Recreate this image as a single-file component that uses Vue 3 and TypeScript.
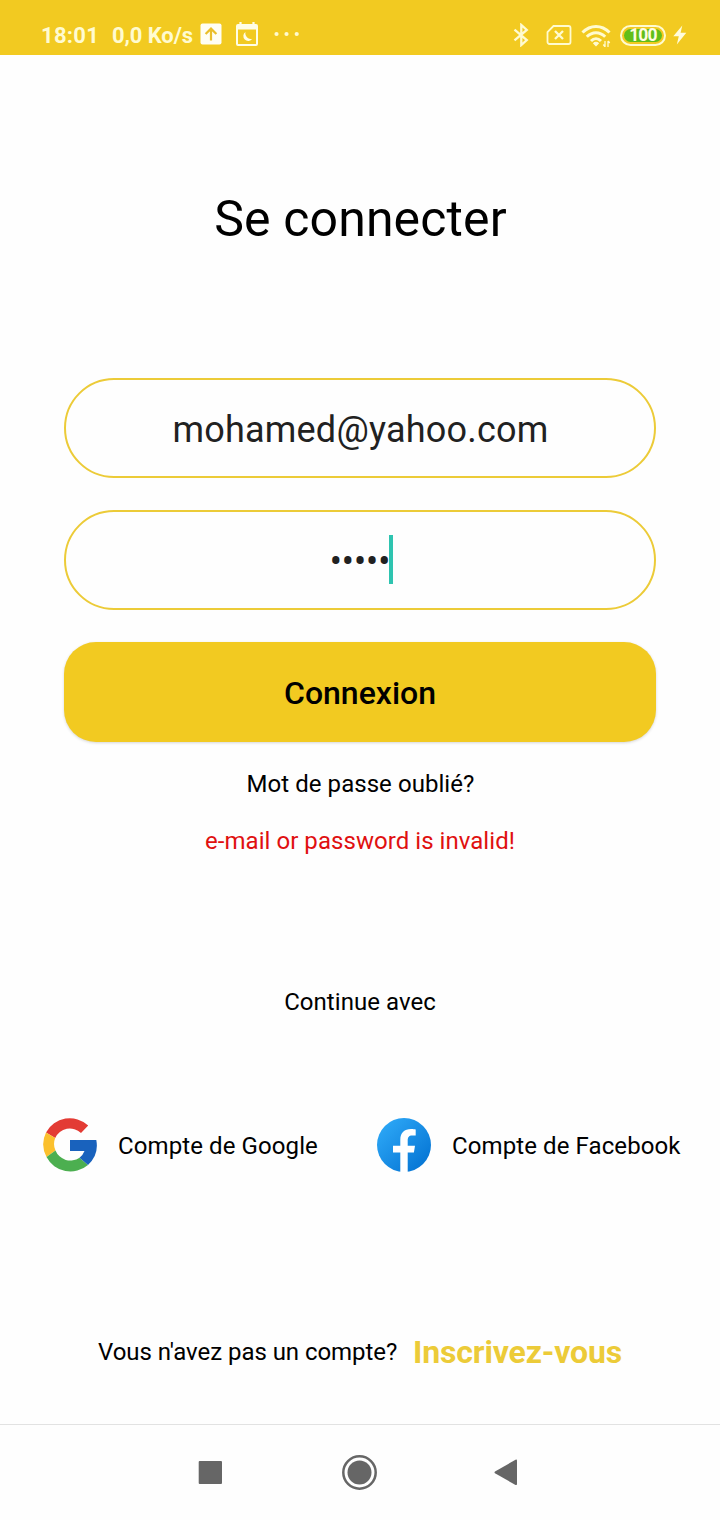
<script setup lang="ts">
import { ref } from 'vue'

const email = ref<string>('mohamed@yahoo.com')
const passwordLength = ref<number>(5)
</script>

<template>
  <div class="screen">
    <header class="status">
      <span class="clock">18:01</span>
      <span class="speed">0,0 Ko/s</span>
      <svg class="upload" width="22" height="22" viewBox="0 0 22 22">
        <rect x="0.5" y="0.5" width="21" height="21" rx="2" fill="#fffef4" />
        <path d="M11 17.500V6M5.600 11L11 5.600l5.400 5.400" fill="none" stroke="#eabf2b" stroke-width="2.200" />
      </svg>
      <svg class="calendar" width="24" height="24" viewBox="0 0 24 24">
        <path d="M5.500 0v4M18.500 0v4" stroke="#fffde6" stroke-width="2.200" />
        <path fill-rule="evenodd" fill="#fffde6" d="M3 2h18a2 2 0 0 1 2 2v18a2 2 0 0 1-2 2H3a2 2 0 0 1-2-2V4a2 2 0 0 1 2-2zM3 7.500V22h18V7.500z" />
        <path d="M10.500 10a4.900 4.900 0 1 0 6.800 6.800a5.600 5.600 0 0 1-6.800-6.800z" fill="#fffde6" />
      </svg>
      <svg class="more" width="26" height="6" viewBox="0 0 26 6">
        <circle cx="2.500" cy="3" r="2.100" /><circle cx="12.500" cy="3" r="2.100" /><circle cx="22.700" cy="3" r="2.100" />
      </svg>
      <svg class="bluetooth" width="16" height="24" viewBox="0 0 16 24">
        <path d="M1.500 6.700L13.800 17 8.300 22V2L13.800 7 1.500 17.300" fill="none" stroke="#fffbd0" stroke-width="2.300" />
      </svg>
      <svg class="sim" width="26" height="20" viewBox="0 0 26 20">
        <path d="M7.500 1H22.500a2 2 0 0 1 2 2v14a2 2 0 0 1-2 2h-19a2 2 0 0 1-2-2V7z" fill="none" stroke="#fffbd0" stroke-width="1.800" />
        <path d="M9 6l8 8M17 6l-8 8" stroke="#fffbd0" stroke-width="2.300" />
      </svg>
      <svg class="wifi" width="30" height="24" viewBox="0 0 30 24">
        <g fill="none" stroke="#fffbd0" stroke-width="3">
          <path d="M1.500 8.500C9.500 0.500 20.500 0.500 28.500 8.500" />
          <path d="M5.800 12.800C11.300 7.300 18.700 7.300 24.200 12.800" />
          <path d="M10 17C13 14 17 14 20 17" />
        </g>
        <path d="M15 22.500L11.800 19.200Q15 16.500 18.200 19.200z" fill="#fffbd0" />
        <path d="M24 17v6M27 17v6M22.300 20.500l1.500 2M28.700 19l-1.500-2" fill="none" stroke="#fffbd0" stroke-width="1.300" />
      </svg>
      <div class="battery"><span class="level">100</span></div>
      <svg class="bolt" width="14" height="20" viewBox="0 0 14 20">
        <path d="M9.300 0.500L0.300 11.300H5.800L3.800 19.500 13.300 7.800H7.600z" fill="#fffcdc" />
      </svg>
    </header>

    <main class="content">
      <h1 class="title">Se connecter</h1>
      <div class="field email">{{ email }}</div>
      <div class="field password">
        <span class="dots">{{ '•'.repeat(passwordLength) }}</span><i class="caret"></i>
      </div>
      <button class="submit" type="button">Connexion</button>
      <p class="forgot">Mot de passe oublié?</p>
      <p class="error">e-mail or password is invalid!</p>
      <p class="continue">Continue avec</p>

      <div class="accounts">
        <div class="account google">
          <svg width="54" height="54" viewBox="0 0 54 54">
            <path fill="#e33b34" d="M3 14.500A27 27 0 0 1 45.200 7.500L38 15A16 16 0 0 0 12.200 20z" />
            <path fill="#fbc02d" d="M3 14.500A27 27 0 0 0 3.500 39L12.500 32.500A16 16 0 0 1 12.200 20z" />
            <path fill="#4caf50" d="M3.500 39A27 27 0 0 0 45 47L36.500 39.700A16 16 0 0 1 12.500 32.500z" />
            <path fill="#1962bd" d="M27 22H53.300A27 27 0 0 1 45 47L36.500 39.700A15 15 0 0 0 41.500 33H27z" />
          </svg>
          <span>Compte de Google</span>
        </div>
        <div class="account facebook">
          <svg width="54" height="54" viewBox="0 0 54 54">
            <defs>
              <linearGradient id="fb" x1="0.150" y1="0.150" x2="0.850" y2="0.850">
                <stop offset="0" stop-color="#2aa4f4" />
                <stop offset="1" stop-color="#0878d6" />
              </linearGradient>
            </defs>
            <circle cx="27" cy="27" r="27" fill="url(#fb)" />
            <path fill="#fff" d="M30.700 34.500h6.200l1.100-6.800h-7.300V22.500c0-3 1-5 4.500-5H38.700V11.500c-1-.2-2.700-.4-4.700-.4-6.500 0-10.700 3.600-10.700 10.700v5.900H16v6.800h7.300V54h7.400z" />
          </svg>
          <span>Compte de Facebook</span>
        </div>
      </div>

      <div class="signup">
        <span class="question">Vous n'avez pas un compte?</span>
        <a class="join">Inscrivez-vous</a>
      </div>
    </main>

    <nav class="navbar">
      <svg class="recent" width="24" height="23" viewBox="0 0 24 23"><rect x="0.700" y="0" width="23.300" height="23" rx="1" /></svg>
      <svg class="home" width="37" height="35" viewBox="0 0 37 35">
        <circle cx="18.500" cy="17.500" r="16.200" fill="none" stroke="#666" stroke-width="2.500" />
        <circle cx="18.500" cy="17.500" r="12" />
      </svg>
      <svg class="back" width="24" height="27" viewBox="0 0 24 27">
        <path d="M1 12.600L21.500 0.800Q23 .2 23 1.600V25.100Q23 26.600 21.500 25.900L1 14.300Q0 13.500 1 12.600z" />
      </svg>
    </nav>
  </div>
</template>

<style>
body {
  margin: 0;
  background: #fefefe;
}
</style>

<style scoped>
.screen {
  width: 720px;
  height: 1520px;
  display: flex;
  flex-direction: column;
  overflow: hidden;
  background: #fefefe;
  color: #000;
  font-family: Roboto, "Liberation Sans", sans-serif;
}
.screen svg {
  display: block;
  flex: none;
}
.status {
  height: 55px;
  box-sizing: border-box;
  padding: 16px 0 0 41px;
  display: flex;
  align-items: center;
  background: #f2ca21;
  color: #fffbd0;
  font-size: 22px;
  line-height: 39px;
  font-weight: 700;
  white-space: nowrap;
}
.clock { width: 71px; letter-spacing: 0.3px; }
.speed { width: 88px; letter-spacing: -0.1px; }
.upload { margin-top: -3px; }
.calendar { margin: -3px 0 0 13px; }
.more { margin: -3px 0 0 15px; fill: #fffbd0; }
.bluetooth { margin: -1px 0 0 213px; }
.sim { margin: -1px 0 0 17px; }
.wifi { margin: 0 0 0 9px; }
.battery {
  width: 46px;
  height: 21px;
  box-sizing: border-box;
  margin: -1px 0 0 9px;
  padding: 2px;
  border: 2px solid #fffbd0;
  border-radius: 11px;
}
.level {
  display: block;
  height: 13px;
  border-radius: 7px;
  background: #62be18;
  color: #fffce0;
  font-size: 17.500px;
  line-height: 13px;
  letter-spacing: -0.8px;
  text-align: center;
}
.bolt { margin: -1px 0 0 7px; }
.content {
  flex: 1;
  padding: 0 64px;
  display: flex;
  flex-direction: column;
}
.title {
  margin: 134px 0 0;
  padding-left: 1px;
  font-size: 50px;
  line-height: 60px;
  font-weight: 400;
  letter-spacing: 0.12px;
  text-align: center;
}
.field {
  height: 100px;
  box-sizing: border-box;
  border: 2px solid #eccb38;
  border-radius: 50px;
  display: flex;
  align-items: center;
  justify-content: center;
  color: #212121;
  font-size: 36px;
  line-height: 42px;
}
.email {
  margin-top: 129px;
  padding-top: 4px;
  padding-left: 1px;
  letter-spacing: 0.22px;
}
.password {
  margin-top: 32px;
  padding: 0 0 2px 2px;
}
.dots {
  padding-top: 6px;
  margin: 0 -1px 0 1px;
  letter-spacing: -0.05px;
}
.caret {
  width: 4px;
  height: 49px;
  background: #2ec4b0;
}
.submit {
  height: 100px;
  margin: 32px 0 0;
  padding: 2px 0 0;
  border: 0;
  border-radius: 32px;
  background: #f2ca21;
  box-shadow: 0 1px 3px rgba(0, 0, 0, 0.16);
  color: #000;
  font: 500 32px/40px Roboto, "Liberation Sans", sans-serif;
}
.forgot,
.error,
.continue {
  margin: 0;
  padding-left: 1px;
  font-size: 24px;
  line-height: 30px;
  letter-spacing: 0.05px;
  text-align: center;
}
.forgot { margin-top: 27px; }
.error { margin-top: 27px; padding-left: 0; color: #e01010; }
.continue { margin-top: 131px; padding-left: 0; }
.accounts {
  margin: 101px -40px 0 -21px;
  display: flex;
}
.account {
  display: flex;
  align-items: center;
  gap: 21px;
  font-size: 24px;
  line-height: 30px;
  letter-spacing: 0.1px;
  white-space: nowrap;
}
.account span { margin-top: 2px; }
.google { width: 334px; }
.signup {
  margin: 160px -20px 0 34px;
  display: flex;
  align-items: center;
  font-size: 24px;
  line-height: 40px;
  white-space: nowrap;
}
.question { width: 315px; letter-spacing: -0.05px; }
.join {
  color: #eccb38;
  font-size: 32px;
  font-weight: 700;
  letter-spacing: -0.15px;
}
.navbar {
  height: 96px;
  box-sizing: border-box;
  border-top: 1px solid #e2e2e2;
  padding-left: 198px;
  display: flex;
  align-items: center;
  fill: #666;
}
.home { margin-left: 119px; }
.back { margin-left: 116px; }
</style>
